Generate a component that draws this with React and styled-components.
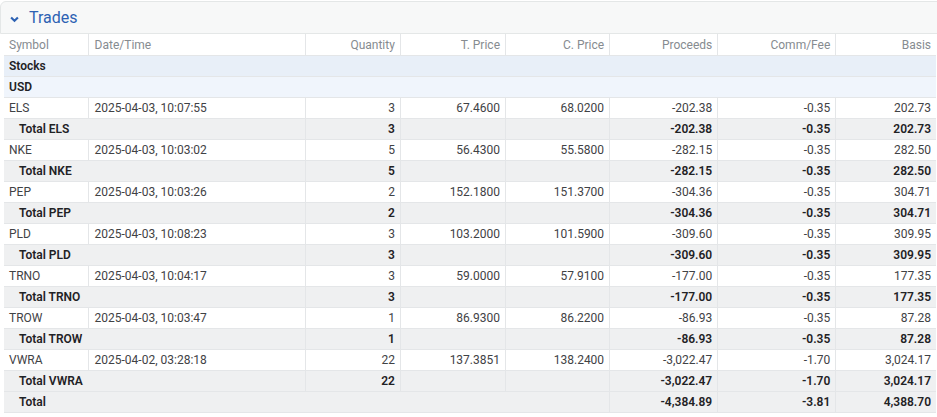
import React from 'react';
import styled, { createGlobalStyle } from 'styled-components';

const GlobalStyle = createGlobalStyle`
  html, body {
    margin: 0;
    padding: 0;
    background: #fff;
    overflow: hidden;
  }
  body {
    font-family: Roboto, "Liberation Sans", sans-serif;
  }
`;

const columns = [
  { key: 'symbol', label: 'Symbol', width: 84, align: 'left' },
  { key: 'date', label: 'Date/Time', width: 217, align: 'left' },
  { key: 'qty', label: 'Quantity', width: 95, align: 'right' },
  { key: 'tprice', label: 'T. Price', width: 105, align: 'right' },
  { key: 'cprice', label: 'C. Price', width: 104, align: 'right' },
  { key: 'proceeds', label: 'Proceeds', width: 108, align: 'right' },
  { key: 'comm', label: 'Comm/Fee', width: 118, align: 'right' },
  { key: 'basis', label: 'Basis', width: 100, align: 'right' },
];

const trades = [
  ['ELS', '2025-04-03, 10:07:55', '3', '67.4600', '68.0200', '-202.38', '-0.35', '202.73'],
  ['NKE', '2025-04-03, 10:03:02', '5', '56.4300', '55.5800', '-282.15', '-0.35', '282.50'],
  ['PEP', '2025-04-03, 10:03:26', '2', '152.1800', '151.3700', '-304.36', '-0.35', '304.71'],
  ['PLD', '2025-04-03, 10:08:23', '3', '103.2000', '101.5900', '-309.60', '-0.35', '309.95'],
  ['TRNO', '2025-04-03, 10:04:17', '3', '59.0000', '57.9100', '-177.00', '-0.35', '177.35'],
  ['TROW', '2025-04-03, 10:03:47', '1', '86.9300', '86.2200', '-86.93', '-0.35', '87.28'],
  ['VWRA', '2025-04-02, 03:28:18', '22', '137.3851', '138.2400', '-3,022.47', '-1.70', '3,024.17'],
];

const Panel = styled.div`
  width: calc(100% + 12px);
`;

const PanelHeader = styled.div`
  margin-top: 1px;
  height: 33px;
  box-sizing: border-box;
  display: flex;
  align-items: center;
  gap: 10px;
  padding-left: 9px;
  background: #f7f8f8;
  border: 1px solid #e4e7e7;
  border-top-left-radius: 6px;
  color: #2d62b3;
  font-size: 16px;
`;

const Table = styled.table`
  margin-left: 4px;
  width: 932px;
  table-layout: fixed;
  border-collapse: collapse;
  font-size: 12px;
  color: #3f4245;
`;

const HeadCell = styled.th`
  height: 21px;
  padding: 0 5px 0 6px;
  font-weight: 400;
  color: #868b90;
  text-align: ${(p) => p.$align};
  border-left: 1px solid #e4e6e8;
  border-bottom: 1px solid #e4e6e8;
  white-space: nowrap;

  &:first-child {
    border-left: none;
    padding-left: 5px;
  }
`;

const Row = styled.tr`
  background: ${(p) => p.$bg || '#fff'};
  font-weight: ${(p) => (p.$bold ? 600 : 400)};
  color: ${(p) => (p.$bold ? '#1f2225' : '#3f4245')};
`;

const Cell = styled.td`
  height: 20px;
  padding: 0 5px 0 ${(p) => (p.$indent ? '15px' : '6px')};
  text-align: ${(p) => p.$align || 'left'};
  border-left: 1px solid #e4e6e8;
  border-bottom: 1px solid #e4e6e8;
  white-space: nowrap;
  overflow: hidden;

  &:first-child {
    border-left: none;
    padding-left: ${(p) => (p.$indent ? '15px' : '5px')};
  }
`;

const Chevron = () => (
  <svg width="9" height="7" viewBox="0 0 9 7" style={{ marginTop: 3 }}>
    <path d="M1.1 1.4 L4.5 4.8 L7.9 1.4" fill="none" stroke="#2d62b3" strokeWidth="2.1" />
  </svg>
);

const GroupRow = ({ label, bg }) => (
  <Row $bg={bg} $bold>
    <Cell colSpan={8}>{label}</Cell>
  </Row>
);

const TradeRows = ({ t }) => (
  <>
    <Row>
      {t.map((v, i) => (
        <Cell key={i} $align={columns[i].align}>
          {v}
        </Cell>
      ))}
    </Row>
    <Row $bg="#eff0f1" $bold>
      <Cell colSpan={2} $indent>
        Total {t[0]}
      </Cell>
      <Cell $align="right">{t[2]}</Cell>
      <Cell />
      <Cell />
      <Cell $align="right">{t[5]}</Cell>
      <Cell $align="right">{t[6]}</Cell>
      <Cell $align="right">{t[7]}</Cell>
    </Row>
  </>
);

export default function App() {
  return (
    <>
      <GlobalStyle />
      <Panel>
        <PanelHeader>
          <Chevron />
          Trades
        </PanelHeader>
      </Panel>
      <Table>
        <colgroup>
          {columns.map((c) => (
            <col key={c.key} style={{ width: c.width }} />
          ))}
        </colgroup>
        <thead>
          <tr>
            {columns.map((c) => (
              <HeadCell key={c.key} $align={c.align}>
                {c.label}
              </HeadCell>
            ))}
          </tr>
        </thead>
        <tbody>
          <GroupRow label="Stocks" bg="#e8eff8" />
          <GroupRow label="USD" bg="#f0f5fc" />
          {trades.map((t) => (
            <TradeRows key={t[0]} t={t} />
          ))}
          <Row $bg="#eff0f1" $bold>
            <Cell colSpan={5} $indent>
              Total
            </Cell>
            <Cell $align="right">-4,384.89</Cell>
            <Cell $align="right">-3.81</Cell>
            <Cell $align="right">4,388.70</Cell>
          </Row>
        </tbody>
      </Table>
    </>
  );
}
